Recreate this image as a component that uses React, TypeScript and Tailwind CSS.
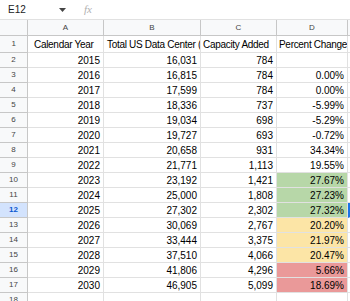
import React from 'react';

type Row = [string, string, string, string, string?];

// year, total, added, pct, fill
const rows: Row[] = [
  ['2015', '16,031', '784', ''],
  ['2016', '16,815', '784', '0.00%'],
  ['2017', '17,599', '784', '0.00%'],
  ['2018', '18,336', '737', '-5.99%'],
  ['2019', '19,034', '698', '-5.29%'],
  ['2020', '19,727', '693', '-0.72%'],
  ['2021', '20,658', '931', '34.34%'],
  ['2022', '21,771', '1,113', '19.55%'],
  ['2023', '23,192', '1,421', '27.67%', 'bg-[#b7d7a8]'],
  ['2024', '25,000', '1,808', '27.23%', 'bg-[#b7d7a8]'],
  ['2025', '27,302', '2,302', '27.32%', 'bg-[#b7d7a8]'],
  ['2026', '30,069', '2,767', '20.20%', 'bg-[#fce5a6]'],
  ['2027', '33,444', '3,375', '21.97%', 'bg-[#fce5a6]'],
  ['2028', '37,510', '4,066', '20.47%', 'bg-[#fce5a6]'],
  ['2029', '41,806', '4,296', '5.66%', 'bg-[#ea9999]'],
  ['2030', '46,905', '5,099', '18.69%', 'bg-[#ea9999]'],
];

const cols = 'grid grid-cols-[28px_76px_97px_76px_71px_1fr]';
const cell = 'border-r border-b border-[#e1e1e1] overflow-hidden whitespace-nowrap';
const rowHead = 'bg-[#f8f9fa] border-r border-b border-[#c7c7c7] flex items-center justify-center text-[8px] text-[#444]';

export default function App() {
  return (
    <div className="w-[350px] h-[301px] overflow-hidden bg-white text-black" style={{ fontFamily: '"Liberation Sans", Arial, sans-serif' }}>
      {/* formula bar */}
      <div className="h-[20px] flex items-center border-b border-[#e1e1e1]">
        <div className="w-[76px] flex items-center pl-[8px] pr-[8px] text-[10px] text-[#202124]">
          <span className="flex-1">E12</span>
          <svg width="7" height="4" viewBox="0 0 7 4" className="mr-[2px]">
            <path d="M0 0h7L3.5 4z" fill="#444" />
          </svg>
        </div>
        <span className="ml-[8px] text-[11px] italic text-[#b0b0b0]" style={{ fontFamily: '"Liberation Serif", serif' }}>fx</span>
      </div>

      {/* column headers */}
      <div className={`${cols} h-[16px] bg-[#f8f9fa] text-[8px] text-[#444]`}>
        <div className="border-r border-b border-[#c7c7c7]" />
        {['A', 'B', 'C', 'D'].map(l => (
          <div key={l} className="border-r border-b border-[#c7c7c7] flex items-center justify-center">{l}</div>
        ))}
        <div className="border-b border-[#c7c7c7]" />
      </div>

      {/* header row */}
      <div className={`${cols} h-[17px] text-[10px] tracking-[-0.3px]`}>
        <div className={rowHead}>1</div>
        <div className={`${cell} flex items-center pl-[6px]`}>Calendar Year</div>
        <div className={`${cell} flex items-center pl-[3px]`}>Total US Data Center (MW)</div>
        <div className={`${cell} flex items-center pl-[2px]`}>Capacity Added</div>
        <div className={`${cell} flex items-center pl-[2px]`}>Percent Change</div>
        <div className="border-b border-[#e1e1e1]" />
      </div>

      {rows.map(([year, total, added, pct, fill], i) => {
        const n = i + 2;
        const sel = n === 12;
        return (
          <div key={n} className={`${cols} h-[15px] text-[10px]`}>
            <div className={sel ? 'bg-[#d3e3fd] border-r border-b border-[#c7c7c7] flex items-center justify-center text-[8px] font-bold text-[#0b57d0]' : rowHead}>{n}</div>
            <div className={`${cell} flex items-center justify-end pr-[3px]`}>{year}</div>
            <div className={`${cell} flex items-center justify-end pr-[3px]`}>{total}</div>
            <div className={`${cell} flex items-center justify-end pr-[3px]`}>{added}</div>
            <div className={`${cell} ${fill ?? ''} flex items-center justify-end pr-[3px]`}>{pct}</div>
            <div className={`border-b border-[#e1e1e1] ${sel ? 'border-l-2 border-l-[#1a73e8]' : ''}`} />
          </div>
        );
      })}

      <div className={`${cols} h-[15px] text-[10px]`}>
        <div className={rowHead}>18</div>
        <div className={cell} />
        <div className={cell} />
        <div className={cell} />
        <div className={cell} />
        <div className="border-b border-[#e1e1e1]" />
      </div>
    </div>
  );
}
